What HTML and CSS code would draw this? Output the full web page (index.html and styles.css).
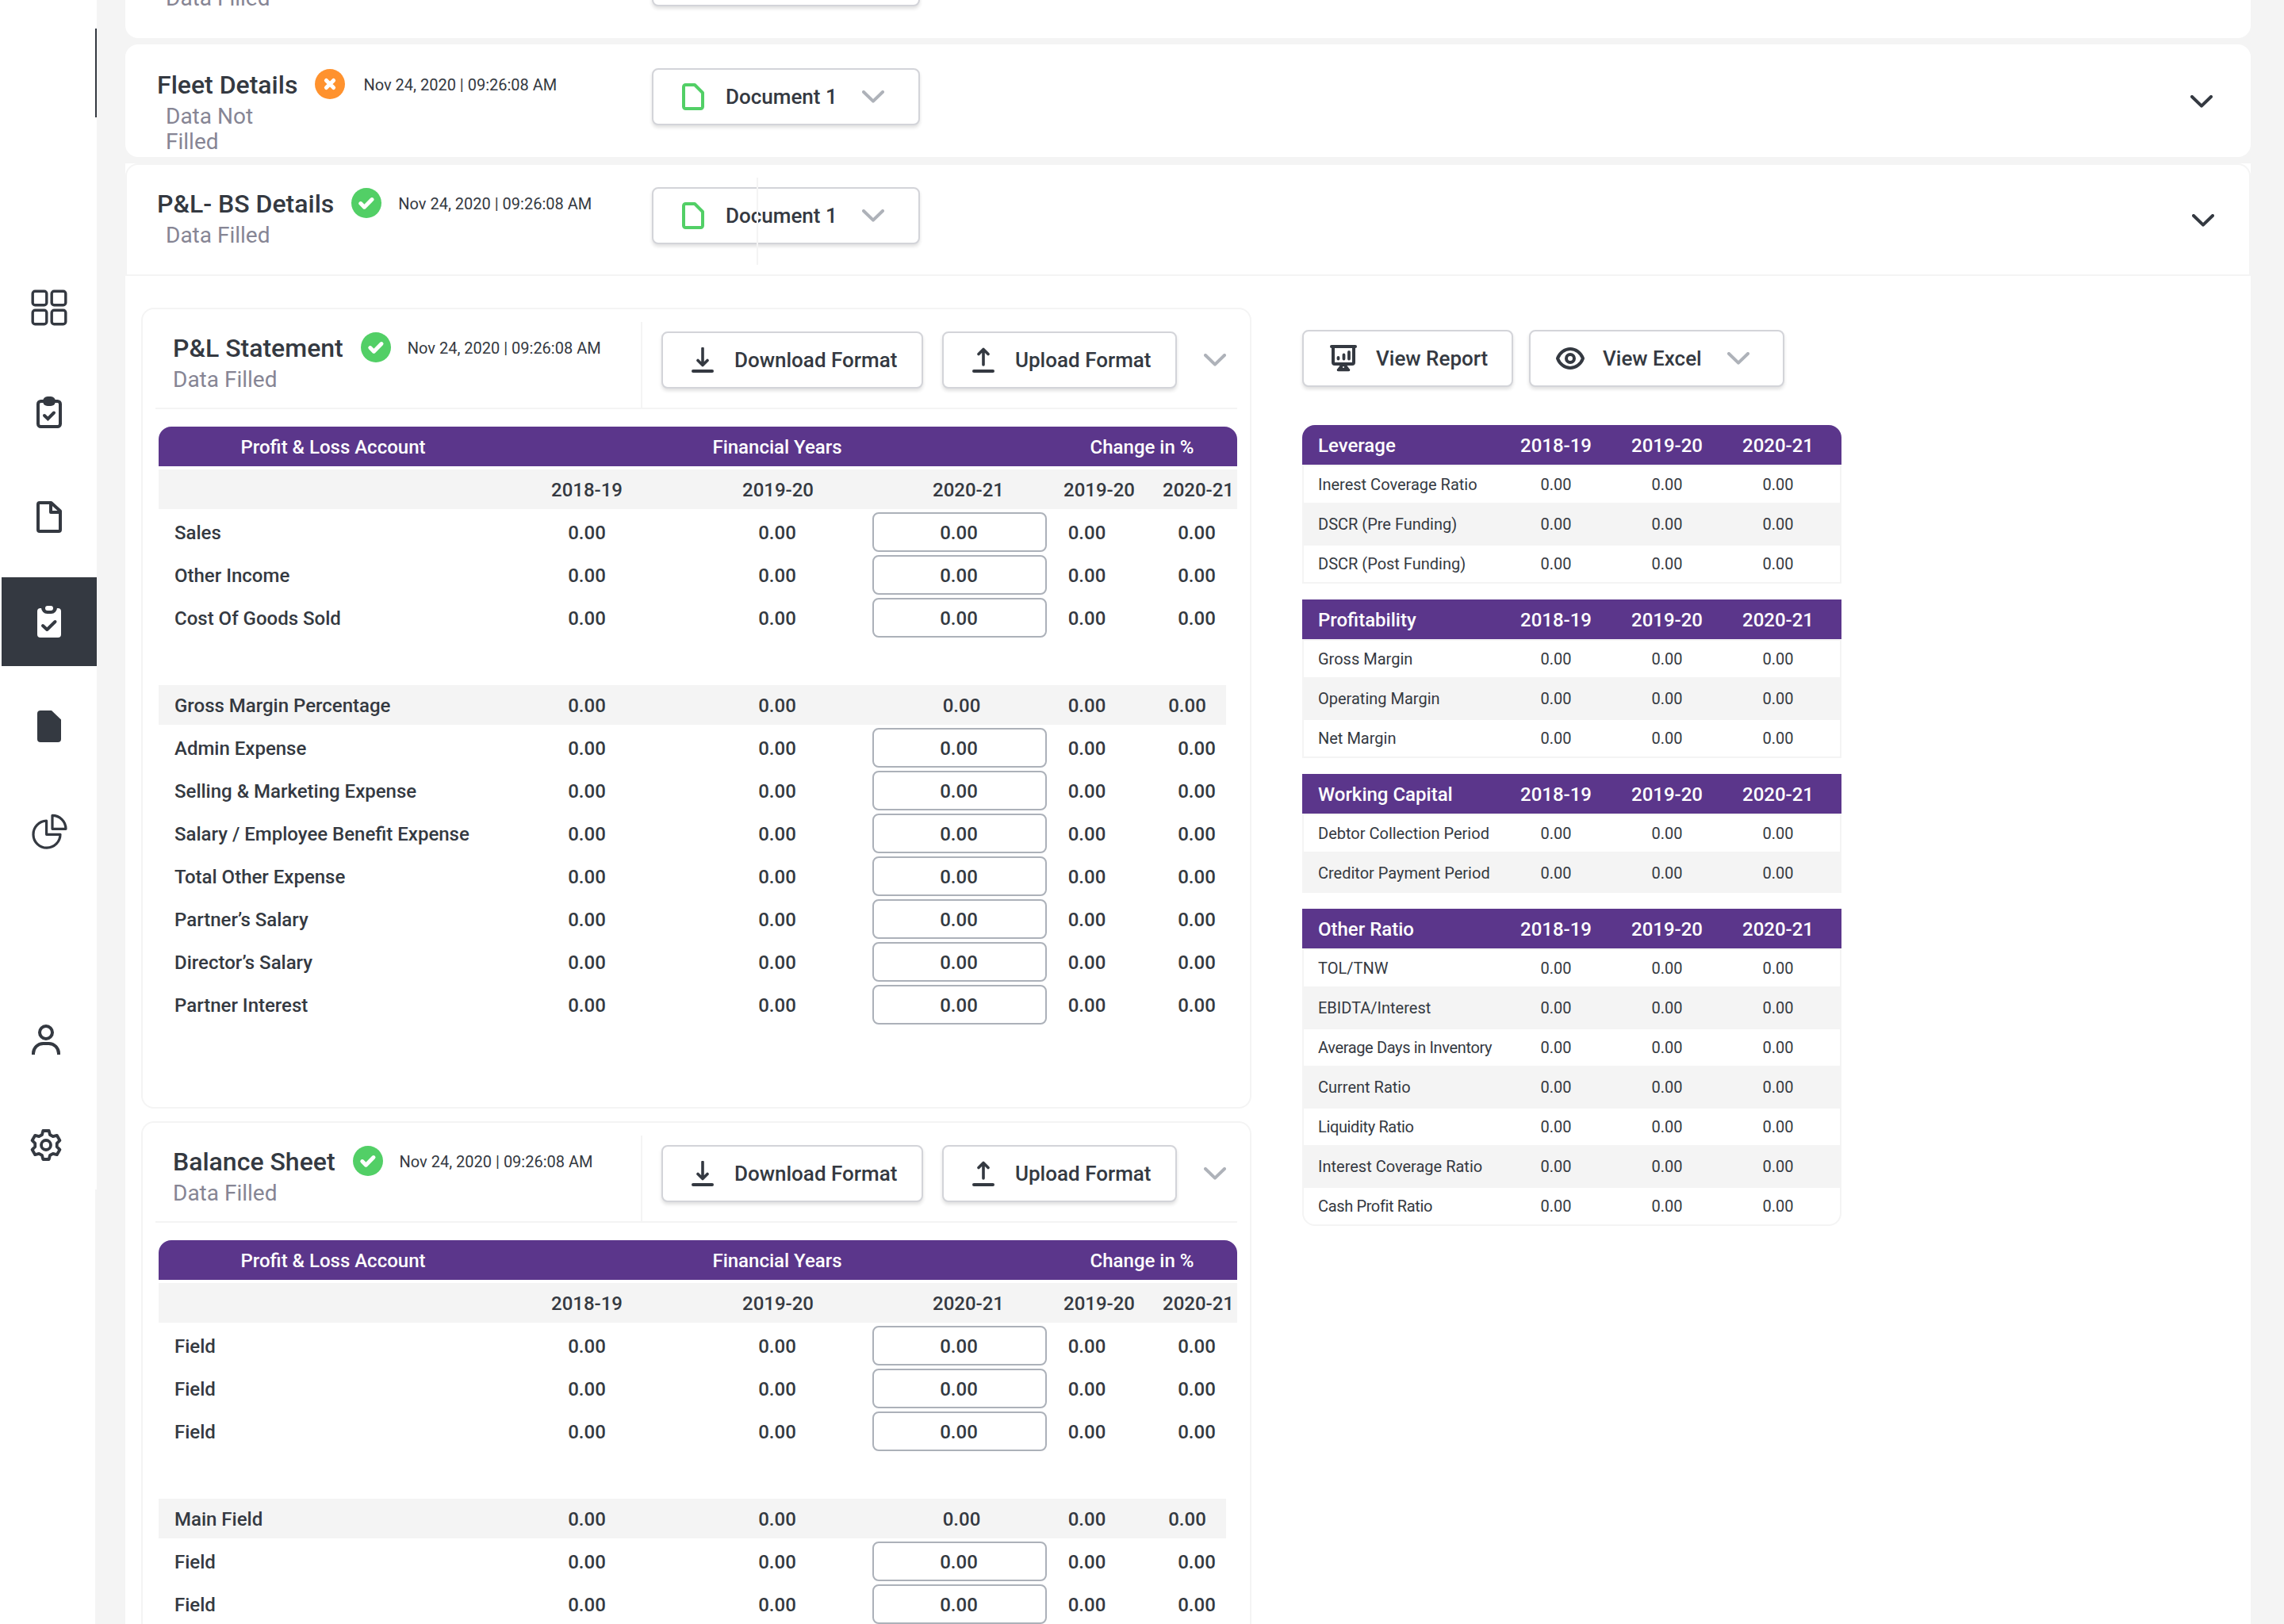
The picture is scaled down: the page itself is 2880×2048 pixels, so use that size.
FILE: index.html
```html
<!DOCTYPE html>
<html lang="en">
<head>
  <meta charset="UTF-8" />
  <meta name="viewport" content="width=device-width, initial-scale=1.0"/>
  <title>P&amp;L - BS Details</title>
  <link rel="stylesheet" href="styles.css">
</head>
<body>
  <!-- shared icons -->
  <svg class="sprite" width="0" height="0">
    <symbol id="i-chevron" viewBox="0 0 28 16"><path d="M2 2l12 11.6L26 2" fill="none" stroke="currentColor" stroke-width="4" stroke-linecap="round" stroke-linejoin="round"/></symbol>
    <symbol id="i-check" viewBox="0 0 38 38"><circle cx="19" cy="19" r="19" fill="#52cf66"/><path d="M11.8 19.6l4.6 4.6L26 14.6" fill="none" stroke="#fff" stroke-width="5" stroke-linecap="round" stroke-linejoin="round"/></symbol>
    <symbol id="i-cross" viewBox="0 0 38 38"><circle cx="19" cy="19" r="19" fill="#ff922e"/><path d="M14.4 14.4l9.2 9.2M23.6 14.4l-9.2 9.2" fill="none" stroke="#fff" stroke-width="5" stroke-linecap="round"/></symbol>
    <symbol id="i-doc" viewBox="0 0 28 34"><path d="M4.500 2H16l10 10v17.500a2.500 2.500 0 0 1-2.500 2.500h-19A2.500 2.500 0 0 1 2 29.500v-25A2.500 2.500 0 0 1 4.500 2z" fill="none" stroke="#52cf66" stroke-width="4" stroke-linejoin="round"/></symbol>
    <symbol id="i-download" viewBox="0 0 28 32"><path d="M14 1.500V22M8 16.500l6 6 6-6" fill="none" stroke="currentColor" stroke-width="3.600" stroke-linecap="round" stroke-linejoin="round"/><path d="M2 30h24" stroke="currentColor" stroke-width="4" stroke-linecap="round"/></symbol>
    <symbol id="i-upload" viewBox="0 0 28 32"><path d="M14 22V2.500M8 8.500l6-6 6 6" fill="none" stroke="currentColor" stroke-width="3.600" stroke-linecap="round" stroke-linejoin="round"/><path d="M2 30h24" stroke="currentColor" stroke-width="4" stroke-linecap="round"/></symbol>
  </svg>

  <div class="layout">
    <aside class="sidebar">
      <div class="sidebar-mark"></div>
      <nav class="nav">
        <a class="nav-item">
          <svg width="46" height="46" viewBox="0 0 46 46" fill="none" stroke="currentColor" stroke-width="3.400"><rect x="2.200" y="2.200" width="17.600" height="17.600" rx="3"/><rect x="26.200" y="2.200" width="17.600" height="17.600" rx="3"/><rect x="2.200" y="26.200" width="17.600" height="17.600" rx="3"/><rect x="26.200" y="26.200" width="17.600" height="17.600" rx="3"/></svg>
        </a>
        <a class="nav-item">
          <svg width="32" height="40" viewBox="0 0 32 40"><rect x="2" y="6" width="28" height="32" rx="3.500" fill="none" stroke="currentColor" stroke-width="4"/><rect x="8" y="0" width="16" height="12" rx="6" fill="currentColor"/><path d="M10 24l4.400 4.200L22 20.500" fill="none" stroke="currentColor" stroke-width="4" stroke-linecap="round"/></svg>
        </a>
        <a class="nav-item">
          <svg width="32" height="40" viewBox="0 0 32 40" fill="none" stroke="currentColor" stroke-width="4" stroke-linejoin="round"><path d="M4 2h14.500L30 12.500V36a2 2 0 0 1-2 2H4a2 2 0 0 1-2-2V4a2 2 0 0 1 2-2z"/><path d="M18 2v12h12"/></svg>
        </a>
        <a class="nav-item active">
          <svg width="30" height="40" viewBox="0 0 30 40"><rect x="0" y="3" width="30" height="37" rx="4" fill="#fff"/><path d="M5 0h20v2.500a7.500 7.500 0 0 1-7.500 7.500h-5A7.500 7.500 0 0 1 5 2.500z" fill="#343941"/><rect x="10" y="0" width="10" height="6" rx="3" fill="#fff"/><path d="M7 25l5.300 5L22.500 20" fill="none" stroke="#343941" stroke-width="4" stroke-linecap="round" stroke-linejoin="round"/></svg>
        </a>
        <a class="nav-item">
          <svg width="30" height="40" viewBox="0 0 30 40"><path d="M4 0h14l12 11.500V36a4 4 0 0 1-4 4H4a4 4 0 0 1-4-4V4a4 4 0 0 1 4-4z" fill="currentColor"/></svg>
        </a>
        <a class="nav-item">
          <svg width="45" height="45" viewBox="0 0 45 45" fill="none" stroke="currentColor" stroke-width="3.200" stroke-linejoin="round"><path d="M18.600 26.300V9.200A17 17 0 1 0 36 26.300z"/><path d="M26 19.300V2.300a17 17 0 0 1 17 17z"/></svg>
        </a>
      </nav>
      <nav class="nav nav-bottom">
        <a class="nav-item">
          <svg width="36" height="38" viewBox="0 0 36 38" fill="none" stroke="currentColor" stroke-width="4"><circle cx="18" cy="10" r="8"/><path d="M2 38v-1.500A12.500 12.500 0 0 1 14.500 24h7A12.500 12.500 0 0 1 34 36.500V38"/></svg>
        </a>
        <a class="nav-item">
          <svg width="40" height="40" viewBox="-20 -20 40 40" fill="none" stroke="currentColor" stroke-width="3.800" stroke-linejoin="round"><path d="M-3.700-18H3.700L5-13l3.760 2.170 4.980-1.370 3.700 6.400-3.680 3.630v4.340l3.680 3.630-3.700 6.400-4.980-1.370L5 13l-1.300 5h-7.400L-5 13l-3.760-2.170-4.980 1.370-3.700-6.400 3.680-3.630v-4.340L-17.440-5.800l3.700-6.400 4.980 1.370L-5-13z"/><circle cx="0" cy="0" r="6"/></svg>
        </a>
      </nav>
    </aside>

    <main class="main">
      <section class="row-card row-card-top">
        <div class="head-info">
          <div class="status">Data Filled</div>
        </div>
        <div class="btn doc-btn"></div>
      </section>

      <section class="row-card">
        <div class="head-info">
          <div class="title-line">
            <h2>Fleet Details</h2>
            <svg class="badge"><use href="#i-cross"/></svg>
            <span class="date date-fleet">Nov 24, 2020 | 09:26:08 AM</span>
          </div>
          <div class="status">Data Not Filled</div>
        </div>
        <button class="btn doc-btn">
          <svg class="icon-doc"><use href="#i-doc"/></svg>
          <span>Document 1</span>
          <svg class="chevron muted"><use href="#i-chevron"/></svg>
        </button>
        <svg class="chevron expand"><use href="#i-chevron"/></svg>
      </section>

      <section class="panel">
        <div class="row-card outlined">
          <div class="head-info">
            <div class="title-line">
              <h2>P&amp;L- BS Details</h2>
              <svg class="badge"><use href="#i-check"/></svg>
              <span class="date">Nov 24, 2020 | 09:26:08 AM</span>
            </div>
            <div class="status">Data Filled</div>
          </div>
          <button class="btn doc-btn">
            <svg class="icon-doc"><use href="#i-doc"/></svg>
            <span>Document 1</span>
            <svg class="chevron muted"><use href="#i-chevron"/></svg>
          </button>
          <svg class="chevron expand"><use href="#i-chevron"/></svg>
          <i class="v-line"></i>
        </div>

        <div class="panel-body">
          <div class="sheets">
            <!-- P&L statement -->
            <div class="sheet">
              <div class="sheet-head">
                <div class="sheet-info">
                  <div class="title-line">
                    <h2>P&amp;L Statement</h2>
                    <svg class="badge"><use href="#i-check"/></svg>
                    <span class="date">Nov 24, 2020 | 09:26:08 AM</span>
                  </div>
                  <div class="status">Data Filled</div>
                </div>
                <div class="sheet-actions">
                  <button class="btn download-btn"><svg class="icon-load"><use href="#i-download"/></svg><span>Download Format</span></button>
                  <button class="btn upload-btn"><svg class="icon-load"><use href="#i-upload"/></svg><span>Upload Format</span></button>
                  <svg class="chevron muted"><use href="#i-chevron"/></svg>
                </div>
              </div>
              <div class="table">
                <div class="t-head"><span>Profit &amp; Loss Account</span><span>Financial Years</span><span>Change in %</span></div>
                <div class="t-years"><span></span><span>2018-19</span><span>2019-20</span><span>2020-21</span><span>2019-20</span><span>2020-21</span></div>
                <div class="t-row"><span>Sales</span><span>0.00</span><span>0.00</span><span class="field">0.00</span><span>0.00</span><span>0.00</span></div>
                <div class="t-row"><span>Other Income</span><span>0.00</span><span>0.00</span><span class="field">0.00</span><span>0.00</span><span>0.00</span></div>
                <div class="t-row"><span>Cost Of Goods Sold</span><span>0.00</span><span>0.00</span><span class="field">0.00</span><span>0.00</span><span>0.00</span></div>
                <div class="t-row total"><span>Gross Margin Percentage</span><span>0.00</span><span>0.00</span><span>0.00</span><span>0.00</span><span>0.00</span></div>
                <div class="t-row"><span>Admin Expense</span><span>0.00</span><span>0.00</span><span class="field">0.00</span><span>0.00</span><span>0.00</span></div>
                <div class="t-row"><span>Selling &amp; Marketing Expense</span><span>0.00</span><span>0.00</span><span class="field">0.00</span><span>0.00</span><span>0.00</span></div>
                <div class="t-row"><span>Salary / Employee Benefit Expense</span><span>0.00</span><span>0.00</span><span class="field">0.00</span><span>0.00</span><span>0.00</span></div>
                <div class="t-row"><span>Total Other Expense</span><span>0.00</span><span>0.00</span><span class="field">0.00</span><span>0.00</span><span>0.00</span></div>
                <div class="t-row"><span>Partner’s Salary</span><span>0.00</span><span>0.00</span><span class="field">0.00</span><span>0.00</span><span>0.00</span></div>
                <div class="t-row"><span>Director’s Salary</span><span>0.00</span><span>0.00</span><span class="field">0.00</span><span>0.00</span><span>0.00</span></div>
                <div class="t-row"><span>Partner Interest</span><span>0.00</span><span>0.00</span><span class="field">0.00</span><span>0.00</span><span>0.00</span></div>
              </div>
            </div>

            <!-- Balance sheet -->
            <div class="sheet">
              <div class="sheet-head">
                <div class="sheet-info">
                  <div class="title-line">
                    <h2>Balance Sheet</h2>
                    <svg class="badge"><use href="#i-check"/></svg>
                    <span class="date">Nov 24, 2020 | 09:26:08 AM</span>
                  </div>
                  <div class="status">Data Filled</div>
                </div>
                <div class="sheet-actions">
                  <button class="btn download-btn"><svg class="icon-load"><use href="#i-download"/></svg><span>Download Format</span></button>
                  <button class="btn upload-btn"><svg class="icon-load"><use href="#i-upload"/></svg><span>Upload Format</span></button>
                  <svg class="chevron muted"><use href="#i-chevron"/></svg>
                </div>
              </div>
              <div class="table">
                <div class="t-head"><span>Profit &amp; Loss Account</span><span>Financial Years</span><span>Change in %</span></div>
                <div class="t-years"><span></span><span>2018-19</span><span>2019-20</span><span>2020-21</span><span>2019-20</span><span>2020-21</span></div>
                <div class="t-row"><span>Field</span><span>0.00</span><span>0.00</span><span class="field">0.00</span><span>0.00</span><span>0.00</span></div>
                <div class="t-row"><span>Field</span><span>0.00</span><span>0.00</span><span class="field">0.00</span><span>0.00</span><span>0.00</span></div>
                <div class="t-row"><span>Field</span><span>0.00</span><span>0.00</span><span class="field">0.00</span><span>0.00</span><span>0.00</span></div>
                <div class="t-row total"><span>Main Field</span><span>0.00</span><span>0.00</span><span>0.00</span><span>0.00</span><span>0.00</span></div>
                <div class="t-row"><span>Field</span><span>0.00</span><span>0.00</span><span class="field">0.00</span><span>0.00</span><span>0.00</span></div>
                <div class="t-row"><span>Field</span><span>0.00</span><span>0.00</span><span class="field">0.00</span><span>0.00</span><span>0.00</span></div>
              </div>
            </div>
          </div>

          <div class="ratios">
            <div class="ratio-actions">
              <button class="btn report-btn">
                <svg width="34" height="34" viewBox="0 0 34 34" fill="none" stroke="currentColor"><path d="M2 2h30" stroke-width="4" stroke-linecap="round"/><path d="M4 3v19a2 2 0 0 0 2 2h22a2 2 0 0 0 2-2V3" stroke-width="4"/><path d="M10.500 16v1.500M17.500 12.500v5M24 9v8.500" stroke-width="3.800" stroke-linecap="round"/><path d="M12.500 26h9l3.500 5v2H9v-2z" fill="currentColor" stroke="none"/><path d="M10.500 31.500h13" stroke-width="3.500" stroke-linecap="round"/><circle cx="17" cy="28" r="1" fill="#fff" stroke="none"/></svg>
                <span>View Report</span>
              </button>
              <button class="btn excel-btn">
                <svg width="36" height="28" viewBox="0 0 36 28" fill="none" stroke="currentColor" stroke-width="4"><path d="M2 14C4.500 7 11 2 18 2s13.500 5 16 12c-2.500 7-9 12-16 12S4.500 21 2 14z" stroke-linejoin="round"/><circle cx="18" cy="14" r="5"/></svg>
                <span>View Excel</span>
                <svg class="chevron muted"><use href="#i-chevron"/></svg>
              </button>
            </div>

            <div class="ratio-table">
              <div class="r-head"><span>Leverage</span><span>2018-19</span><span>2019-20</span><span>2020-21</span></div>
              <div class="r-row"><span>Inerest Coverage Ratio</span><span>0.00</span><span>0.00</span><span>0.00</span></div>
              <div class="r-row"><span>DSCR (Pre Funding)</span><span>0.00</span><span>0.00</span><span>0.00</span></div>
              <div class="r-row"><span>DSCR (Post Funding)</span><span>0.00</span><span>0.00</span><span>0.00</span></div>
            </div>
            <div class="ratio-table">
              <div class="r-head"><span>Profitability</span><span>2018-19</span><span>2019-20</span><span>2020-21</span></div>
              <div class="r-row"><span>Gross Margin</span><span>0.00</span><span>0.00</span><span>0.00</span></div>
              <div class="r-row"><span>Operating Margin</span><span>0.00</span><span>0.00</span><span>0.00</span></div>
              <div class="r-row"><span>Net Margin</span><span>0.00</span><span>0.00</span><span>0.00</span></div>
            </div>
            <div class="ratio-table">
              <div class="r-head"><span>Working Capital</span><span>2018-19</span><span>2019-20</span><span>2020-21</span></div>
              <div class="r-row"><span>Debtor Collection Period</span><span>0.00</span><span>0.00</span><span>0.00</span></div>
              <div class="r-row"><span>Creditor Payment Period</span><span>0.00</span><span>0.00</span><span>0.00</span></div>
            </div>
            <div class="ratio-table">
              <div class="r-head"><span>Other Ratio</span><span>2018-19</span><span>2019-20</span><span>2020-21</span></div>
              <div class="r-row"><span>TOL/TNW</span><span>0.00</span><span>0.00</span><span>0.00</span></div>
              <div class="r-row"><span>EBIDTA/Interest</span><span>0.00</span><span>0.00</span><span>0.00</span></div>
              <div class="r-row"><span class="tight">Average Days in Inventory</span><span>0.00</span><span>0.00</span><span>0.00</span></div>
              <div class="r-row"><span>Current Ratio</span><span>0.00</span><span>0.00</span><span>0.00</span></div>
              <div class="r-row"><span class="tight">Liquidity Ratio</span><span>0.00</span><span>0.00</span><span>0.00</span></div>
              <div class="r-row"><span>Interest Coverage Ratio</span><span>0.00</span><span>0.00</span><span>0.00</span></div>
              <div class="r-row"><span class="tight">Cash Profit Ratio</span><span>0.00</span><span>0.00</span><span>0.00</span></div>
            </div>
          </div>
        </div>
      </section>
    </main>
  </div>
</body>
</html>
```
FILE: styles.css
```css
* {
  box-sizing: border-box;
}

body {
  margin: 0;
  height: 2048px;
  overflow: hidden;
  font-family: Roboto, "Liberation Sans", sans-serif;
  color: #343941;
  background: #f4f4f4;
}

svg {
  display: block;
  flex: none;
}

.sprite {
  position: absolute;
}

.layout {
  display: flex;
  height: 2048px;
  overflow: hidden;
}

/* sidebar */
.sidebar {
  width: 122px;
  flex: none;
  padding-top: 36px;
  background: linear-gradient(#fff, #fff) 0 0 / 122px 1500px no-repeat,
              linear-gradient(#fff, #fff) 0 0 / 120px 100% no-repeat;
}

.sidebar-mark {
  width: 2px;
  height: 112px;
  margin-left: 120px;
  background: #343941;
}

.nav {
  display: flex;
  flex-direction: column;
  gap: 20px;
  margin-top: 184px;
}

.nav-item {
  display: flex;
  align-items: center;
  justify-content: center;
  height: 112px;
  margin-left: 2px;
}

.nav-item.active {
  background: #343941;
}

.nav-bottom {
  margin-top: 151px;
  gap: 21px;
  padding-right: 8px;
}

/* main column */
.main {
  width: 2680px;
  margin-left: 36px;
  display: flex;
  flex-direction: column;
  gap: 8px;
}

.row-card {
  display: flex;
  align-items: flex-start;
  height: 142px;
  flex: none;
  border: 2px solid #fff;
  border-radius: 16px;
  background: #fff;
}

.row-card-top {
  height: 48px;
  align-items: flex-end;
  border-radius: 0 0 16px 16px;
}

.row-card-top .btn {
  margin: 0 0 38px;
}

.row-card-top .head-info {
  padding-bottom: 32px;
}

.outlined {
  position: relative;
  border-color: #f4f4f4;
  border-radius: 16px 16px 0 0;
}

.outlined .expand {
  margin-right: 44px;
}

.v-line {
  position: absolute;
  left: 794px;
  top: 16px;
  width: 2px;
  height: 110px;
  background: #f4f4f4;
}

.head-info {
  width: 662px;
  padding: 29px 0 0 38px;
}

.head-info .status {
  width: 150px;
  margin-left: 11px;
}

.title-line {
  display: flex;
  align-items: center;
  height: 38px;
}

h2 {
  margin: 0;
  padding-top: 1px;
  font-size: 32px;
  font-weight: 500;
  line-height: 38px;
}

.badge {
  width: 38px;
  height: 38px;
  margin: 0 21px 0 22px;
}

.date {
  font-size: 20px;
  margin-top: 2px;
}

.date-fleet {
  margin-left: 2px;
}

.status {
  margin-top: 6px;
  font-size: 28px;
  line-height: 32px;
  color: #868594;
}

.btn {
  display: flex;
  align-items: center;
  flex: none;
  height: 72px;
  padding: 0;
  border: 2px solid #d3d4d9;
  border-radius: 8px;
  background: #fff;
  box-shadow: 0 3px 4px rgba(0, 0, 0, 0.12);
  font: 500 26px Roboto, "Liberation Sans", sans-serif;
  color: #343941;
  white-space: nowrap;
}

.btn span {
  padding-bottom: 1px;
}

.doc-btn {
  width: 338px;
  margin-top: 28px;
  padding-left: 36px;
}

.doc-btn span {
  width: 172px;
  margin-left: 27px;
  text-align: left;
}

.icon-doc {
  width: 28px;
  height: 34px;
}

.icon-load {
  width: 28px;
  height: 32px;
  margin-right: 26px;
}

.chevron {
  width: 28px;
  height: 16px;
}

.muted {
  color: #aeb2b9;
}

.expand {
  margin: 62px 46px 0 auto;
}

/* white panel under the P&L row */
.panel {
  height: 1842px;
  background: #fff;
}

.panel-body {
  display: flex;
  gap: 64px;
  padding: 40px 0 0 20px;
}

.sheets {
  width: 1400px;
  display: flex;
  flex-direction: column;
  gap: 16px;
}

.sheet {
  height: 1010px;
  border: 2px solid #f4f4f4;
  border-radius: 16px;
  padding: 16px 16px 0;
}

.sheet-head {
  display: flex;
  height: 110px;
  border-bottom: 2px solid #f4f4f4;
}

.sheet-info {
  width: 614px;
  padding: 13px 0 0 22px;
  border-right: 2px solid #f4f4f4;
}

.sheet-actions {
  display: flex;
  align-items: flex-start;
  padding: 12px 0 0 24px;
}

.download-btn {
  width: 330px;
  padding-left: 36px;
}

.upload-btn {
  width: 296px;
  margin-left: 24px;
  padding-left: 36px;
}

.sheet-actions .chevron {
  margin: 28px 0 0 34px;
}

/* account tables */
.table {
  display: flex;
  flex-direction: column;
  gap: 4px;
  width: 1360px;
  margin: 22px 0 0 4px;
  font-size: 24px;
  font-weight: 500;
}

.t-head,
.t-years,
.t-row {
  display: grid;
  align-items: center;
  height: 50px;
  text-align: center;
}

.t-head span,
.t-years span,
.t-row span {
  padding-top: 2px;
}

.t-head {
  grid-template-columns: 440px 680px 240px;
  border-radius: 16px 16px 0 0;
  background: #5b368b;
  color: #fff;
}

.t-years {
  grid-template-columns: 420px 240px 242px 238px 92px 158px;
  background: #f4f4f4;
}

.t-row {
  grid-template-columns: 420px 240px 240px 220px 101px 139px;
}

.t-row span:first-child {
  padding-left: 20px;
  text-align: left;
}

.t-row span:last-child {
  padding-left: 37px;
}

.t-row .field {
  height: 50px;
  line-height: 48px;
  padding: 0 2px 0 0;
  border: 2px solid #acb1b9;
  border-radius: 8px;
}

.total {
  grid-template-columns: 420px 240px 240px 225px 91px 130px;
  width: 1346px;
  margin-top: 56px;
  background: #f4f4f4;
}

.t-row.total span:last-child {
  padding-left: 32px;
}

/* ratio tables */
.ratios {
  width: 680px;
  padding-top: 28px;
}

.ratio-actions {
  display: flex;
  gap: 20px;
  margin-bottom: 48px;
}

.report-btn {
  width: 266px;
  padding-left: 33px;
}

.report-btn span {
  margin-left: 24px;
}

.excel-btn {
  width: 322px;
  padding-left: 32px;
}

.excel-btn span {
  width: 157px;
  margin-left: 23px;
  text-align: left;
}

.ratio-table {
  margin-bottom: 20px;
}

.r-head,
.r-row {
  display: grid;
  grid-template-columns: 250px 140px 140px 140px;
  align-items: center;
  height: 50px;
  text-align: center;
}

.r-head {
  padding-top: 2px;
  background: #5b368b;
  color: #fff;
  font-size: 24px;
  font-weight: 500;
}

.r-row {
  grid-template-columns: 248px 140px 140px 140px;
  border: 2px solid #f4f4f4;
  font-size: 20px;
}

.r-row:nth-child(odd) {
  background: #f4f4f4;
}

.r-head span:first-child {
  padding-left: 20px;
  text-align: left;
}

.r-row span:first-child {
  padding-left: 18px;
  text-align: left;
}

.tight {
  letter-spacing: -0.36px;
}

.ratio-table:nth-child(2) .r-head {
  border-radius: 16px 16px 0 0;
}

.ratio-table:last-child .r-row:last-child {
  border-radius: 0 0 16px 16px;
}
```
